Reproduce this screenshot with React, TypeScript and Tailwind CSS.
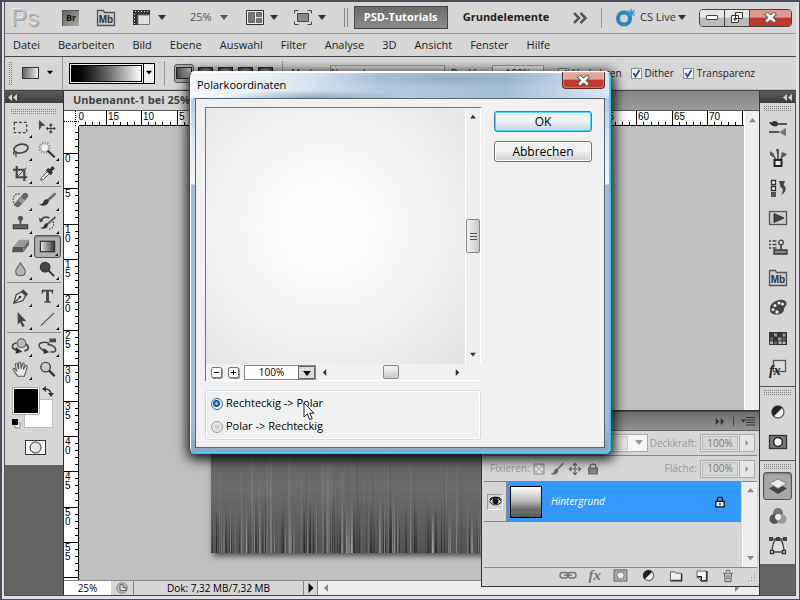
import React, { useState } from 'react';

const UNIT = 7.073; // one centimetre at 25 % zoom

function Ico({ children, size = 20 }: { children: React.ReactNode; size?: number }) {
  return (
    <svg width={size} height={size} viewBox="0 0 20 20" fill="none" stroke="#444" strokeWidth="1.3" className="block shrink-0" aria-hidden="true">
      {children}
    </svg>
  );
}

function Arrow({ dir = 'down', className = '' }: { dir?: 'down' | 'up' | 'left' | 'right'; className?: string }) {
  const shapes = { down: 'M0 1h8L4 6z', up: 'M0 6h8L4 1z', left: 'M6 0v8L2 4z', right: 'M2 0v8l4-4z' };
  return (
    <svg viewBox="0 0 8 8" fill="currentColor" className={`block shrink-0 ${className}`} aria-hidden="true">
      <path d={shapes[dir]} />
    </svg>
  );
}

function Collapse() {
  return (
    <svg width="9" height="7" viewBox="0 0 9 7" fill="#d2d2d2" aria-hidden="true">
      <path d="M4 0v7L0 3.500zM9 0v7L5 3.500z" />
    </svg>
  );
}

function Grip() {
  return (
    <div className="flex h-[10px] items-center justify-center">
      <div className="h-[5px] w-[49px] max-w-[78%] bg-[repeating-linear-gradient(0deg,transparent_0_1px,#d6d6d6_1px_2px),repeating-linear-gradient(90deg,#808080_0_1px,transparent_1px_2px)]" />
    </div>
  );
}

/* ---------- tool box ---------- */

const toolGroups: { name: string; sub?: boolean; icon: React.ReactNode }[][] = [
  [
    { name: 'Auswahlrechteck', sub: true, icon: <rect x="3.500" y="4.500" width="13" height="11" strokeDasharray="3 2" /> },
    {
      name: 'Verschieben',
      icon: (
        <>
          <path d="M1 2l7 6-4 .5L1 13z" fill="#4a4a4a" stroke="none" />
          <path d="M13.500 6.500v9M9 11h9M12 8l1.500-1.800L15 8M12 14l1.500 1.800L15 14M10.500 9.500L9 11l1.500 1.500M16.500 9.500L18 11l-1.500 1.500" strokeWidth="1.1" />
        </>
      ),
    },
    {
      name: 'Lasso',
      sub: true,
      icon: (
        <>
          <ellipse cx="10.500" cy="8" rx="7.500" ry="4.500" transform="rotate(-12 10.500 8)" strokeWidth="1.8" />
          <path d="M4 11c-2 1-2 3 0 3s2-2 .5-3M5 14c1 1 .5 2 0 3" strokeWidth="1.2" />
        </>
      ),
    },
    {
      name: 'Zauberstab',
      sub: true,
      icon: (
        <>
          <circle cx="7" cy="7" r="4.500" stroke="#888" strokeWidth="4" strokeDasharray="1 1.300" />
          <circle cx="7" cy="7" r="3.500" fill="#eee" stroke="none" />
          <path d="M10 10l7.500 7" stroke="#333" strokeWidth="2.2" />
        </>
      ),
    },
    {
      name: 'Freistellen',
      sub: true,
      icon: (
        <>
          <path d="M6 2v12h11M2 6h12v12" strokeWidth="2.2" />
          <path d="M5 15L16 4" strokeWidth="1" />
        </>
      ),
    },
    {
      name: 'Pipette',
      sub: true,
      icon: (
        <>
          <path d="M11 7L3.500 14.500 3 17l2.500-.5L13 9" fill="#eee" strokeWidth="1" />
          <path d="M9.500 5.500l5 5M12 8l4.500-4.500" strokeWidth="3.600" stroke="#333" />
        </>
      ),
    },
  ],
  [
    {
      name: 'Reparaturpinsel',
      sub: true,
      icon: (
        <>
          <path d="M9 3C2 2 1 10 4 15" strokeDasharray="1.500 1.500" stroke="#333" />
          <path d="M7 14l8-9" strokeWidth="6" strokeLinecap="round" stroke="#666" />
          <path d="M9.500 11.500l3-3.400" strokeWidth="5" stroke="#999" />
        </>
      ),
    },
    {
      name: 'Pinsel',
      sub: true,
      icon: (
        <>
          <path d="M18.500 2.500L10 10" strokeWidth="2.500" stroke="#666" />
          <path d="M11.500 10.500C10 8 7 8 6 11c-.7 2.500-3 3-5 3 3 2.500 9.500 2 10.500-3.500z" fill="#333" stroke="none" />
        </>
      ),
    },
    {
      name: 'Kopierstempel',
      sub: true,
      icon: (
        <>
          <circle cx="10" cy="4.500" r="2.700" fill="#555" stroke="none" />
          <path d="M9 6h2v5H9z" fill="#555" stroke="none" />
          <path d="M2.500 11.500h15v4h-15z" fill="#666" stroke="#3d3d3d" />
        </>
      ),
    },
    {
      name: 'Protokollpinsel',
      sub: true,
      icon: (
        <>
          <path d="M18.500 3L9.500 11" strokeWidth="2.200" stroke="#666" />
          <path d="M10.500 10.500C9 9 7 10 6.500 12c-.6 2-3 2.500-4.500 2.500 3 2 8.500 1.200 8.500-4z" fill="#333" stroke="none" />
          <path d="M3 7c2-4 6-4 9-3" strokeWidth="1.800" />
          <path d="M1 4l1 5 4-2z" fill="#444" stroke="none" />
          <path d="M16 8c2 4-1 8-5 8" strokeDasharray="1.500 1.500" />
        </>
      ),
    },
    {
      name: 'Radiergummi',
      sub: true,
      icon: (
        <>
          <path d="M8.500 3H19l-6 7.500H2z" fill="#999" stroke="none" />
          <path d="M2 10.500h11V16H1z" fill="#555" stroke="none" />
          <path d="M13 10.500L19 3v5.500L13 16z" fill="#6e6e6e" stroke="none" />
        </>
      ),
    },
    {
      name: 'Verlauf',
      sub: true,
      icon: (
        <>
          <defs>
            <linearGradient id="toolGrad">
              <stop stopColor="#eee" />
              <stop offset="1" stopColor="#333" />
            </linearGradient>
          </defs>
          <rect x="2.500" y="4.500" width="15" height="11" fill="url(#toolGrad)" stroke="#333" />
        </>
      ),
    },
    { name: 'Weichzeichner', sub: true, icon: <path d="M10 2.500c1 4 5 6 5 9.500 0 6-10 6-10 0 0-3.500 4-5.500 5-9.500z" fill="#b5b5b5" stroke="#666" /> },
    {
      name: 'Abwedler',
      sub: true,
      icon: (
        <>
          <path d="M9 9l8 8" strokeWidth="2" stroke="#333" />
          <circle cx="7.500" cy="7.500" r="5" fill="#484848" stroke="#333" />
        </>
      ),
    },
  ],
  [
    {
      name: 'Zeichenstift',
      sub: true,
      icon: (
        <>
          <path d="M3 17l2.500-9L11 5l4.500 4-3 5.500z" fill="#ddd" />
          <path d="M3 17l6-6" />
          <circle cx="9.500" cy="10.500" r="1.300" fill="#333" stroke="none" />
          <path d="M11.500 3.500l5.500 5" strokeWidth="3" />
        </>
      ),
    },
    { name: 'Text', sub: true, icon: <path d="M4 3h12v4h-1c-.3-1.700-1-2.500-3.500-2.500V14c0 1 .5 1.300 2 1.500v1h-7v-1c1.500-.2 2-.5 2-1.500V4.500C6 4.500 5.300 5.300 5 7H4z" fill="#484848" stroke="none" /> },
    { name: 'Pfadauswahl', sub: true, icon: <path d="M7 2l9 9.500-4.500.3 3 5-2.500 1-2.500-5L7 15.500z" fill="#484848" stroke="none" /> },
    { name: 'Linie', sub: true, icon: <path d="M3 16.500L17 3" stroke="#555" /> },
  ],
  [
    {
      name: '3D-Drehen',
      sub: true,
      icon: (
        <>
          <path d="M6 6C-1 8 1 13 6 13.500M15 7c5 3 4 7-1 7.500" strokeWidth="1.800" />
          <circle cx="11" cy="6.500" r="4.500" fill="#bbb" stroke="#666" />
          <path d="M5 10.500l7 5-7 2z" fill="#333" stroke="none" />
        </>
      ),
    },
    {
      name: '3D-Kamera',
      sub: true,
      icon: (
        <>
          <path d="M12 6.500C4 4-1 7 2 11c2 2.500 4 3.500 6 4M10 8c6 0 10 4 8 7-1 1-3 1-5 .5" strokeWidth="1.600" />
          <path d="M13 1.500h6v4h-6l-1 .5V1z" fill="#444" stroke="none" />
          <path d="M6 11.500l6 4.500-6 2z" fill="#333" stroke="none" />
        </>
      ),
    },
    {
      name: 'Hand',
      sub: true,
      icon: <path d="M7 17L2.500 10.500c-1-2 1-2.500 2.500 0L6 12 4.500 5c-.2-2 1.800-2 2.300 0L8 9.500V3.500c0-2 2-2 2.200 0l.4 6 1.300-5.200c.5-2 2.300-1.300 2 .5L13 10l2-3.500c1-1.700 2.500-.8 2 1-1 4-2 7-3 9.500z" fill="#e7e7e7" stroke="#555" strokeWidth="1.100" />,
    },
    {
      name: 'Zoom',
      icon: (
        <>
          <circle cx="8" cy="7.500" r="5" fill="#ccc" strokeWidth="1.500" />
          <path d="M11.500 11l6 6" strokeWidth="2.500" stroke="#333" />
        </>
      ),
    },
  ],
];

function ToolBox() {
  return (
    <aside className="flex w-[59px] shrink-0 flex-col border-r border-[#333] bg-[#646464]">
      <div className="flex h-[12px] items-center bg-linear-to-b from-[#5a5a5a] to-[#3c3c3c] px-[3px]">
        <Collapse />
      </div>
      <div className="bg-[#d6d6d6] pt-[3px] pb-[8px]">
        <Grip />
        {toolGroups.map((group, i) => (
          <div key={i} className={i < 3 ? 'mx-[2px] mb-[2px] border-b border-[#8c8c8c] pb-px' : 'mx-[2px]'}>
            <div className="grid grid-cols-2">
              {group.map((tool) => (
                <button
                  key={tool.name}
                  aria-label={tool.name}
                  className={`relative flex h-[23px] items-center justify-center rounded-[3px] ${
                    tool.name === 'Verlauf' ? 'border border-[#555] bg-[#b4b4b4] shadow-[inset_0_1px_2px_#777]' : ''
                  }`}
                >
                  <Ico size={19}>{tool.icon}</Ico>
                  {tool.sub && (
                    <svg width="3" height="3" viewBox="0 0 3 3" className="absolute right-[2px] bottom-[1px]" aria-hidden="true">
                      <path d="M3 0v3H0z" fill="#000" />
                    </svg>
                  )}
                </button>
              ))}
            </div>
          </div>
        ))}
        <svg width="50" height="76" viewBox="0 0 50 76" className="mx-auto block" aria-hidden="true">
          <rect x="15.500" y="18.500" width="28" height="28" fill="#fff" stroke="#bbb" />
          <path d="M3.500 6.500h27v27h-27z" fill="#fff" stroke="#aaa" />
          <path d="M5 8h24v24H5z" fill="#000" />
          <path d="M36 8c4 0 6 2 6 6" fill="none" stroke="#333" strokeWidth="1.500" />
          <path d="M37 5v6l-4-3zM39 12h6l-3 4z" fill="#333" />
          <path d="M6 42h5v5H6z" fill="#fff" stroke="#888" />
          <path d="M3 38h6v6H3z" fill="#000" />
          <rect x="16.500" y="59.500" width="20" height="14" fill="#fff" stroke="#333" />
          <circle cx="26.500" cy="66.500" r="5.500" fill="#e4e4e4" stroke="#222" />
        </svg>
      </div>
    </aside>
  );
}

/* ---------- panel dock ---------- */

const mbFolder = (
  <>
    <path d="M1.500 17.500v-15h6l1 2h10v13z" fill="#ccc" stroke="#555" />
    <text x="10" y="15" textAnchor="middle" fontFamily="Liberation Sans" fontWeight="700" fontSize="10" fill="#333" stroke="none">
      Mb
    </text>
  </>
);

const maskIcon = (
  <>
    <rect x="1.500" y="3.500" width="17" height="13" fill="#777" stroke="#333" />
    <circle cx="10" cy="10" r="4.300" fill="#fff" stroke="#111" />
  </>
);

const adjustIcon = (
  <>
    <circle cx="10" cy="10" r="6" fill="#eee" stroke="#666" />
    <path d="M14.500 5.500a6.300 6.300 0 0 0-9 9z" fill="#222" stroke="none" />
  </>
);

const dockGroups: { name: string; icon: React.ReactNode }[][] = [
  [
    {
      name: 'Pinsel',
      icon: (
        <>
          <path d="M10 6h9M1 14h10" strokeWidth="1.800" stroke="#555" />
          <path d="M1 4c3 0 3 1 4-.5 2-1 5 0 5 2.500S7 9 5 8C3 7 2 6 1 4z" fill="#333" stroke="none" />
          <path d="M10 14c3 0 4-2 8-4v8c-4-1-5-4-8-4z" fill="#777" stroke="none" />
        </>
      ),
    },
    {
      name: 'Werkzeugvorgaben',
      icon: (
        <>
          <path d="M8 12L4 5M10 12V3M12 12l4-6" strokeWidth="1.500" />
          <path d="M2 3l4 3-1 3-3-2zM8 1h3v5H9zM14 4l5 2-3 3-3-1z" fill="#555" stroke="none" />
          <path d="M6.500 12h7v6h-7z" fill="#eee" stroke="#222" strokeWidth="2" />
        </>
      ),
    },
    {
      name: 'Protokoll',
      icon: (
        <>
          <path d="M3.500 2.500h4v4h-4zM3.500 8.500h4v4h-4z" fill="#fff" stroke="#333" />
          <path d="M3 14h5v5H3z" fill="#555" stroke="none" />
          <path d="M11 3h6l-1.500 4c4 3 2 8-2.500 10 3-4 2-7-.500-8z" fill="#444" stroke="none" />
        </>
      ),
    },
    {
      name: 'Aktionen',
      icon: (
        <>
          <rect x="1.500" y="3.500" width="17" height="13" fill="#ccc" stroke="#555" />
          <path d="M6 5.500l10 4.500-10 4.500z" fill="#444" stroke="#222" strokeWidth=".8" />
        </>
      ),
    },
    {
      name: 'Kopierquelle',
      icon: (
        <>
          <path d="M1 3h2M1 6.500h2M1 10h2M4.500 3h4M4.500 6.500h4M4.500 10h4" />
          <circle cx="13" cy="4.500" r="2.300" />
          <path d="M12 7h2v4h-2z" fill="#555" stroke="none" />
          <path d="M6 12h13v4H6z" fill="#888" stroke="#333" />
        </>
      ),
    },
    { name: 'Mini Bridge', icon: mbFolder },
    {
      name: 'Farbe',
      icon: (
        <>
          <path d="M11 2c8-1 9 4 6 7-2 2 0 4-3 6-4 3-13 2-12-4 0-5 4-8 9-9z" fill="#444" stroke="none" />
          <g fill="#eee" stroke="none">
            <circle cx="11" cy="5" r="1.500" />
            <circle cx="7" cy="7.500" r="1.500" />
            <circle cx="5" cy="11.500" r="1.500" />
            <circle cx="9" cy="14" r="1.700" />
            <circle cx="14.500" cy="6" r="1.500" />
          </g>
        </>
      ),
    },
    {
      name: 'Farbfelder',
      icon: (
        <>
          <path d="M1 4h18v13H1z" fill="#333" stroke="none" />
          <path d="M6 5.500h3v3H6zM14.500 5.500h3v3h-3zM10 9.500h3.500v3H10z" fill="#999" stroke="none" />
          <path d="M2 9.500h3v3H2zM6 13.500h3v2.500H6zM14.500 9.500h3v3h-3z" fill="#666" stroke="none" />
          <path d="M2 13.500h3v2.500H2zM10.500 13.500h3v2.500h-3zM14.500 13.500h3v2.500h-3z" fill="#bbb" stroke="none" />
        </>
      ),
    },
    {
      name: 'Stile',
      icon: (
        <>
          <rect x="5.500" y="2.500" width="12" height="11" fill="#ddd" stroke="#555" />
          <text x="1" y="17" fontFamily="Liberation Serif" fontStyle="italic" fontWeight="700" fontSize="14" fill="#222" stroke="none">
            fx
          </text>
        </>
      ),
    },
  ],
  [
    { name: 'Korrekturen', icon: adjustIcon },
    { name: 'Masken', icon: maskIcon },
  ],
  [
    {
      name: 'Ebenen',
      icon: (
        <>
          <path d="M1 12.500l9-5 9 5-9 5.500z" fill="#444" stroke="none" />
          <path d="M1.500 7.500L10 3l8.500 4.500L10 12.500z" fill="#eee" stroke="#777" strokeWidth=".8" />
        </>
      ),
    },
    {
      name: 'Kanäle',
      icon: (
        <g stroke="none">
          <circle cx="10" cy="7" r="5" fill="#777" />
          <circle cx="6.500" cy="13" r="5" fill="#555" />
          <circle cx="13.500" cy="13" r="5" fill="#999" />
          <circle cx="10" cy="11" r="3" fill="#eee" />
        </g>
      ),
    },
    {
      name: 'Pfade',
      icon: (
        <>
          <path d="M4 16C4 10 6 4 8 3.500h4c2 .5 4 6.500 4 12.500z" fill="#ddd" />
          <path d="M1 1h4v4H1zM8 1h4v4H8zM15 1h4v4h-4z" fill="#444" stroke="none" />
          <path d="M2.500 14.500h3v3h-3zM14.500 14.500h3v3h-3z" fill="#fff" stroke="#333" />
          <path d="M5 3h10" />
        </>
      ),
    },
  ],
];

function Dock() {
  return (
    <aside className="flex w-[37px] shrink-0 flex-col border-r border-l border-r-[#555] border-l-[#333] bg-[#646464]">
      <div className="flex h-[12px] items-center justify-end bg-linear-to-b from-[#5a5a5a] to-[#3c3c3c] px-[3px]">
        <Collapse />
      </div>
      {dockGroups.map((group, i) => (
        <div key={i} className={`flex flex-col items-stretch bg-[#d6d6d6] pb-[3px] ${i < 2 ? 'border-b border-[#555]' : ''}`}>
          <Grip />
          {group.map((item) => (
            <div key={item.name} className="flex h-[30px] items-center justify-center">
              <button
                aria-label={item.name}
                className={`flex h-[28px] w-[29px] items-center justify-center rounded-[3px] ${
                  item.name === 'Ebenen' ? 'border border-[#555] bg-[#a8a8a8] shadow-[inset_0_1px_2px_#777]' : ''
                }`}
              >
                <Ico>{item.icon}</Ico>
              </button>
            </div>
          ))}
        </div>
      ))}
    </aside>
  );
}

/* ---------- document ---------- */

function HRuler() {
  const origin = 133;
  const ticks = Array.from({ length: 96 }, (_, i) => i - 20);
  return (
    <svg className="block h-[15px] min-w-0 flex-1 border-b border-black bg-white font-['Liberation_Sans',sans-serif]" aria-hidden="true">
      {ticks.map((n) => {
        const x = Math.round(origin + n * UNIT);
        const major = n % 5 === 0;
        return (
          <g key={n}>
            <rect x={x} y={major ? 0 : 11} width="1" height="14" fill="#000" />
            {major && (
              <text x={x + 2} y="9" fontSize="10">
                {Math.abs(n)}
              </text>
            )}
          </g>
        );
      })}
    </svg>
  );
}

function VRuler() {
  const origin = 27;
  const ticks = Array.from({ length: 65 }, (_, i) => i - 3);
  return (
    <svg className="block w-[15px] shrink-0 border-r border-black bg-white font-['Liberation_Sans',sans-serif]" aria-hidden="true">
      {ticks.map((n) => {
        const y = Math.round(origin + n * UNIT);
        const major = n % 5 === 0;
        return (
          <g key={n}>
            <rect x={major ? 0 : 11} y={y} width="15" height="1" fill="#000" />
            {major &&
              n < 60 &&
              String(Math.abs(n))
                .split('')
                .map((d, i) => (
                  <text key={i} x="1" y={y + 9 + i * 9} fontSize="10">
                    {d}
                  </text>
                ))}
          </g>
        );
      })}
    </svg>
  );
}

// deterministic noise so the streaks stay the same on every render
const noise = (i: number) => {
  const v = Math.sin(i * 127.1 + 11.7) * 43758.5453;
  return v - Math.floor(v);
};

function Artwork({ className, id }: { className?: string; id: string }) {
  return (
    <svg viewBox="0 0 390 400" preserveAspectRatio="none" className={className} aria-hidden="true">
      <defs>
        <linearGradient id={`${id}-bg`} x2="0" y2="1">
          <stop stopColor="#fff" />
          <stop offset="0.45" stopColor="#bbb" />
          <stop offset="0.76" stopColor="#666" />
          <stop offset="0.84" stopColor="#6c6c6c" />
          <stop offset="1" stopColor="#525252" />
        </linearGradient>
        <linearGradient id={`${id}-l`} x2="0" y2="1">
          <stop stopColor="#bbb" stopOpacity="0" />
          <stop offset="1" stopColor="#bbb" />
        </linearGradient>
        <linearGradient id={`${id}-d`} x2="0" y2="1">
          <stop stopColor="#1c1c1c" stopOpacity="0" />
          <stop offset="1" stopColor="#1c1c1c" />
        </linearGradient>
      </defs>
      <rect width="390" height="400" fill={`url(#${id}-bg)`} />
      {Array.from({ length: 250 }, (_, i) => {
        const light = noise(i + 900) > 0.6;
        const h = noise(i + 300) > 0.25 ? 35 + noise(i + 500) * 25 : 80 + noise(i + 500) * 60;
        return (
          <rect
            key={i}
            x={Math.floor(noise(i) * 390)}
            y={400 - h}
            width={noise(i + 50) > 0.7 ? 2 : 1}
            height={h}
            opacity={h > 70 ? 0.22 : light ? 0.2 + noise(i + 70) * 0.4 : 0.3 + noise(i + 70) * 0.4}
            fill={light ? `url(#${id}-l)` : `url(#${id}-d)`}
          />
        );
      })}
    </svg>
  );
}

function Document() {
  return (
    <main className="flex min-w-0 flex-1 flex-col">
      <div className="flex h-[20px] shrink-0 border-b border-[#555] bg-linear-to-b from-[#858585] to-[#9c9c9c]">
        <div className="flex items-center bg-[#d6d6d6] px-[9px] text-[11px] font-bold whitespace-nowrap text-[#444]">Unbenannt-1 bei 25%</div>
      </div>
      <div className="flex min-h-0 flex-1">
        <div className="flex min-w-0 flex-1 flex-col">
          <div className="flex h-[15px]">
            <svg width="15" height="15" className="block shrink-0 bg-white" aria-hidden="true">
              <path d="M11.500 0v15M0 10.500h15" stroke="#000" strokeDasharray="1 1" />
            </svg>
            <HRuler />
          </div>
          <div className="flex flex-1">
            <VRuler />
            <div className="flex-1 bg-[#bfbfbf] pt-[27px] pb-[27px] pl-[132px]">
              <Artwork id="art" className="block h-[400px] w-[390px] max-w-full shadow-[2px_3px_6px_rgba(0,0,0,0.6)]" />
            </div>
          </div>
        </div>
        <div className="flex w-[15px] shrink-0 flex-col items-center justify-between border-l border-white bg-[#ededed] py-[6px] text-[#888]">
          <Arrow dir="up" className="h-[7px] w-[7px]" />
          <Arrow className="h-[7px] w-[7px]" />
        </div>
      </div>
      <div className="flex h-[15px] shrink-0 items-stretch border-t border-[#888] bg-[#d6d6d6] text-[10px] text-black">
        <input aria-label="Zoomstufe" defaultValue="25%" className="w-[47px] bg-white text-center" />
        <div className="flex w-[23px] items-center justify-center border-r border-[#888]">
          <svg width="12" height="12" viewBox="0 0 12 12" fill="none" stroke="#666" aria-hidden="true">
            <circle cx="6" cy="6" r="5.300" fill="#bbb" stroke="#888" />
            <path d="M4 8.500v-6h3v3h3v3z" fill="#ddd" />
          </svg>
        </div>
        <div className="flex w-[170px] items-center justify-center border-r border-[#888] leading-none">Dok: 7,32 MB/7,32 MB</div>
        <button aria-label="Statusmenü" className="flex w-[14px] items-center justify-center border-r border-[#888]">
          <Arrow dir="right" className="h-[10px] w-[10px]" />
        </button>
        <div className="flex flex-1 items-center justify-between bg-[#ededed] px-[4px] text-[#888]">
          <Arrow dir="left" className="h-[8px] w-[8px]" />
          <Arrow dir="right" className="mr-[14px] h-[8px] w-[8px]" />
        </div>
      </div>
    </main>
  );
}

/* ---------- layers panel ---------- */

function PercentField({ label }: { label: string }) {
  return (
    <label className="flex items-center gap-[3px] whitespace-nowrap">
      {label}
      <span className="flex h-[18px] border border-[#aaa] bg-[#e6e6e6]">
        <input defaultValue="100%" className="m-px w-[36px] border border-[#bbb] bg-[#d6d6d6] text-center text-[10px] text-[#777]" />
        <span className="flex w-[15px] items-center justify-center border-l border-[#aaa]">
          <Arrow dir="right" className="h-[6px] w-[6px]" />
        </span>
      </span>
    </label>
  );
}

function LayersPanel() {
  return (
    <section className="absolute right-[36px] bottom-[8px] z-10 w-[279px] border border-[#333] bg-[#d6d6d6] text-[10px] text-[#999]">
      <header className="flex h-[20px] items-center justify-end gap-[7px] border-t border-b border-t-[#444] border-b-[#666] bg-linear-to-b from-[#6e6e6e] to-[#929292] pr-[4px] text-[#333]">
        <span className="flex">
          <Arrow dir="right" className="-mr-[2px] h-[7px] w-[7px]" />
          <Arrow dir="right" className="h-[7px] w-[7px]" />
        </span>
        <span className="h-[9px] w-px bg-[#444]" />
        <svg width="14" height="9" viewBox="0 0 14 9" stroke="#333" fill="#333" aria-hidden="true">
          <path d="M0 2.500h5L2.500 5.500z" stroke="none" />
          <path d="M5 .5h9M5 3h9M5 5.500h9M5 8h9" />
        </svg>
      </header>
      <div className="mx-[2px] flex h-[25px] items-center justify-between border-b border-[#888] pr-[2px]">
        <div className="flex h-[18px] w-[164px] items-center border border-[#aaa] bg-[#f6f6f6] pr-[4px]">
          <select aria-label="Füllmethode" className="m-px flex-1 appearance-none border border-[#ccc] bg-[#e6e6e6] pl-[4px] leading-[12px]">
            <option>Normal</option>
          </select>
          <Arrow className="ml-[6px] h-[8px] w-[8px]" />
        </div>
        <PercentField label="Deckkraft:" />
      </div>
      <div className="mx-[2px] flex h-[26px] items-center border-b border-[#888] pr-[2px] pl-[6px]">
        <span className="w-[42px]">Fixieren:</span>
        <span className="flex items-center gap-[4px]">
          <Ico size={14}>
            <path d="M3 3h14v14H3z" fill="#eee" stroke="#888" strokeWidth="1.500" />
            <path d="M4 4h4v4H4zM12 4h4v4h-4zM8 8h4v4H8zM4 12h4v4H4zM12 12h4v4h-4z" fill="#bbb" stroke="none" />
          </Ico>
          <Ico size={14}>
            <path d="M19 2L10 11" stroke="#777" strokeWidth="2.500" />
            <path d="M12 11c-2-3-6-1-6 2-1 3-3 3-5 4 4 2 11 1 11-6z" fill="#666" stroke="none" />
          </Ico>
          <Ico size={14}>
            <path d="M10 2v16M2 10h16M7 5l3-3 3 3M7 15l3 3 3-3M5 7l-3 3 3 3M15 7l3 3-3 3" stroke="#666" strokeWidth="1.600" />
          </Ico>
          <Ico size={14}>
            <path d="M6 9V6c0-4 8-4 8 0v3" stroke="#666" strokeWidth="2" />
            <path d="M4 9h12v8H4z" fill="#888" stroke="#666" strokeWidth="2" />
          </Ico>
        </span>
        <span className="ml-auto">
          <PercentField label="Fläche:" />
        </span>
      </div>
      <div className="mx-[2px] flex h-[86px] border-b border-[#888]">
        <div className="flex-1">
          <div className="flex h-[40px] border-b border-[#888]">
            <button aria-label="Sichtbarkeit" className="flex w-[23px] items-center justify-center border-r border-[#888]">
              <span className="flex h-[16px] w-[16px] items-center justify-center border border-t-[#999] border-r-white border-b-white border-l-[#999]">
                <Ico size={13}>
                  <path d="M1 10c4-7 14-7 18 0-4 7-14 7-18 0z" fill="#ddd" stroke="#111" strokeWidth="1.500" />
                  <circle cx="10" cy="9.500" r="4.500" fill="#111" stroke="none" />
                  <path d="M1 7c4-5 14-5 18 0" stroke="#111" strokeWidth="2" />
                </Ico>
              </span>
            </button>
            <div className="flex flex-1 items-center gap-[9px] bg-[#3399ff] pr-[15px] pl-[3px] text-[10px] text-white italic">
              <Artwork id="thumb" className="block h-[32px] w-[32px] border border-black" />
              <span className="flex-1">Hintergrund</span>
              <Ico size={12}>
                <path d="M6 9V5c0-4 8-4 8 0v4" stroke="#111" strokeWidth="2" />
                <path d="M3 9h14v9H3z" fill="#eee" stroke="#111" strokeWidth="2" />
                <path d="M10 11.500v4" stroke="#111" strokeWidth="2" />
              </Ico>
            </div>
          </div>
        </div>
        <div className="ml-[1px] flex w-[15px] flex-col items-center justify-between border-l border-white bg-[#ededed] py-[5px] text-[#888]">
          <Arrow dir="up" className="h-[7px] w-[7px]" />
          <Arrow className="h-[7px] w-[7px]" />
        </div>
      </div>
      <footer className="flex h-[18px] items-center justify-end gap-[12px] pr-[2px] pb-[3px]">
        <svg width="18" height="9" viewBox="0 0 18 9" fill="none" stroke="#777" strokeWidth="1.500" aria-hidden="true">
          <rect x="1" y="1.500" width="8" height="5.500" rx="2.700" />
          <rect x="9" y="1.500" width="8" height="5.500" rx="2.700" />
          <path d="M5 4.300h8" />
        </svg>
        <span className="font-['Liberation_Serif',serif] text-[15px] leading-none font-bold text-[#777] italic">fx</span>
        <Ico size={15}>
          <rect x="1.500" y="2.500" width="17" height="15" fill="#aaa" stroke="#666" />
          <circle cx="10" cy="10" r="4.800" fill="#eee" stroke="#777" />
        </Ico>
        <Ico size={17}>{adjustIcon}</Ico>
        <Ico size={14}>
          <path d="M2 16V4h6l2 2h8v10z" fill="#eee" stroke="#555" />
          <path d="M2 17h16V7" stroke="#222" strokeWidth="2" />
        </Ico>
        <Ico size={14}>
          <path d="M3 3h13v14H9l-6-5z" fill="#fff" stroke="#555" />
          <path d="M3 11h6v6M17 3v14H8" stroke="#222" strokeWidth="2" />
        </Ico>
        <Ico size={14}>
          <path d="M5 7l1 11h8l1-11M3 6h14M7 4c0-3 6-3 6 0M8.500 8.500v7M11.500 8.500v7" stroke="#666" strokeWidth="1.600" />
        </Ico>
        <span className="h-[11px] w-[10px] bg-[radial-gradient(circle,#888_0.8px,transparent_1px)] bg-[length:3px_3px] [clip-path:polygon(100%_0,100%_100%,0_100%)]" />
      </footer>
    </section>
  );
}

/* ---------- dialog ---------- */

function CloseGlyph() {
  return (
    <svg width="13" height="11" viewBox="0 0 13 11" fill="none" aria-hidden="true">
      <path d="M1.500 1l10 9M11.500 1l-10 9" stroke="#555" strokeWidth="4.500" />
      <path d="M2.200 1.500l8.600 8M10.800 1.500l-8.600 8" stroke="#fff" strokeWidth="2.600" />
    </svg>
  );
}

function Radio({ label, checked, onChange }: { label: string; checked: boolean; onChange: () => void }) {
  return (
    <label className="flex h-[23px] items-center gap-[3px]">
      <input
        type="radio"
        name="mode"
        checked={checked}
        onChange={onChange}
        className="h-[12px] w-[12px] appearance-none rounded-full border border-[#999] bg-[radial-gradient(circle,#c8c8c8,#eee_5px)] checked:border-[#3a6ea5] checked:bg-[radial-gradient(circle_at_45%_45%,#9fe8ff_0,#1b7fc4_2px,#0a3d6e_3px,#e8f2fa_4px)]"
      />
      {label}
    </label>
  );
}

function PolarDialog() {
  const [mode, setMode] = useState('polar');

  return (
    <div
      role="dialog"
      aria-labelledby="dialog-title"
      className="absolute top-[69px] left-[187px] z-20 w-[422px] rounded-[6px] border border-t-white border-r-[#1fc4f8] border-b-[#1fc4f8] border-l-[#3d4652] bg-[linear-gradient(180deg,#c9daea_0,#b7cbe0_28px,#dfe9f2_70px,#f2f6fa_112px,#a4bbd6_113px,#a4bbd6_92%,#8aa5c0)] px-[5px] pb-[5px] text-[11px] text-black shadow-[inset_1px_1px_0_#fff,inset_-1px_-1px_0_#4fd0f8,1px_3px_12px_3px_rgba(0,0,0,0.85)]"
    >
      <div className="absolute inset-x-px top-px h-[25px] rounded-t-[5px] bg-[radial-gradient(ellipse_at_29%_100%,rgba(115,145,175,0.7)_0,transparent_22%),radial-gradient(ellipse_at_62%_20%,rgba(130,150,170,0.5)_0,transparent_35%),linear-gradient(90deg,#f4f8fb_0,#e2ebf4_22%,#b4c9df_45%,#a3bdd6_75%,#dae6f0)]" />
      <div className="relative flex h-[26px] items-center justify-between">
        <h2 id="dialog-title" className="pl-[2px] font-normal">
          Polarkoordinaten
        </h2>
        <button aria-label="Schließen" className="flex h-[17px] w-[43px] items-center justify-center self-start rounded-b-[4px] border border-t-0 border-[#5a2a26] bg-linear-to-b from-[#e0a49a] from-45% to-[#c0392b] to-50% shadow-[inset_0_0_2px_#fff]">
          <CloseGlyph />
        </button>
      </div>
      <div className="relative flex gap-[13px] border border-[#56646f] bg-[#f0f0f0] pt-[8px] pr-[12px] pb-[7px] pl-[9px]">
        <div className="flex-1">
          <div className="border-t border-l border-[#777]">
            <div className="flex">
              <div className="h-[256px] flex-1 bg-[radial-gradient(ellipse_at_46%_46%,#fdfdfd_0,#fafafa_25%,#f0f0f0_60%,#e2e2e2)]" />
              <div className="flex w-[16px] flex-col items-center border-x border-white bg-[#eee] py-[6px] text-[#333]">
                <Arrow dir="up" className="h-[6px] w-[6px]" />
                <div className="flex-1" />
                <div className="flex h-[34px] w-[14px] flex-col items-center justify-center gap-[2px] rounded-[2px] border border-[#888] bg-linear-to-r from-[#f4f4f4] to-[#c8c8c8]">
                  <span className="h-px w-[7px] bg-[#555]" />
                  <span className="h-px w-[7px] bg-[#555]" />
                  <span className="h-px w-[7px] bg-[#555]" />
                </div>
                <div className="flex-1" />
                <Arrow className="h-[6px] w-[6px]" />
              </div>
            </div>
            <div className="flex h-[17px] items-center border-b border-white pr-[20px] pl-[5px]">
              <button aria-label="Verkleinern" className="mr-[6px] flex h-[11px] w-[11px] items-center justify-center rounded-[2px] border border-[#777] bg-white shadow-[1px_1px_0_#999]">
                <span className="h-px w-[5px] bg-black" />
              </button>
              <button aria-label="Vergrößern" className="mr-[5px] flex h-[11px] w-[11px] items-center justify-center rounded-[2px] border border-[#777] bg-white shadow-[1px_1px_0_#999]">
                <svg width="5" height="5" viewBox="0 0 5 5" aria-hidden="true">
                  <path d="M0 2.500h5M2.500 0v5" stroke="#000" />
                </svg>
              </button>
              <div className="flex h-[15px] w-[72px] border border-[#888] bg-white">
                <input aria-label="Zoom" defaultValue="100%" className="w-0 flex-1 text-center text-[10px]" />
                <button aria-label="Zoomstufen" className="flex w-[17px] items-end justify-center border border-[#666] bg-[#ddd]">
                  <Arrow className="h-[8px] w-[8px]" />
                </button>
              </div>
              <div className="ml-[5px] flex flex-1 items-center justify-between text-[#333]">
                <Arrow dir="left" className="h-[7px] w-[7px]" />
                <span className="h-[14px] w-[16px] rounded-[2px] border border-[#888] bg-linear-to-b from-[#f6f6f6] to-[#c6c6c6]" />
                <Arrow dir="right" className="h-[7px] w-[7px]" />
              </div>
            </div>
          </div>
          <fieldset className="mt-[9px] rounded-[3px] border border-[#d0dce6] px-[5px] pt-px pb-px shadow-[inset_0_0_0_1px_#fff]">
            <Radio label="Rechteckig -> Polar" checked={mode === 'polar'} onChange={() => setMode('polar')} />
            <Radio label="Polar -> Rechteckig" checked={mode === 'rect'} onChange={() => setMode('rect')} />
          </fieldset>
        </div>
        <div className="flex w-[98px] flex-col gap-[9px] pt-[4px] text-[12px] leading-none">
          <button className="h-[21px] rounded-[3px] border border-[#2a86c0] bg-linear-to-b from-[#eef2f5] from-45% to-[#c3d3dd] shadow-[inset_0_0_0_1px_#4fd6fa]">OK</button>
          <button className="h-[21px] rounded-[3px] border border-[#707070] bg-linear-to-b from-[#f2f2f2] from-45% to-[#cfcfcf] shadow-[inset_0_0_0_1px_#fff]">Abbrechen</button>
        </div>
      </div>
      <svg width="13" height="20" viewBox="0 0 13 20" className="absolute top-[330px] left-[113px]" aria-hidden="true">
        <path d="M1 1v14l3.300-3 2.400 5.500 2.500-1-2.400-5.300H11z" fill="#fff" stroke="#222" />
      </svg>
    </div>
  );
}

/* ---------- application bars ---------- */

function Check({ label }: { label: string }) {
  return (
    <label className="flex items-center gap-[3px]">
      <input
        type="checkbox"
        defaultChecked
        className="peer h-[11px] w-[11px] appearance-none border border-[#8a8f98] bg-[#f4f4f4]"
      />
      <svg width="9" height="9" viewBox="0 0 9 9" className="-ml-[13px] mr-px hidden peer-checked:block" aria-hidden="true">
        <path d="M1.500 4l2 3.500L7.500 1" fill="none" stroke="#2c4a8c" strokeWidth="1.800" />
      </svg>
      {label}
    </label>
  );
}

const menus = ['Datei', 'Bearbeiten', 'Bild', 'Ebene', 'Auswahl', 'Filter', 'Analyse', '3D', 'Ansicht', 'Fenster', 'Hilfe'];

function AppBar() {
  return (
    <header className="flex h-[32px] items-center border-b border-[#999] pr-[4px] pl-[6px] text-[#333]">
      <span className="w-[51px] font-['Liberation_Sans',sans-serif] text-[24px] leading-none text-[#c2c2c2] [text-shadow:1px_1px_0_#999,-1px_-1px_0_#eee]">Ps</span>
      <button className="flex h-[16px] w-[17px] items-center justify-center border-t border-l border-[#555] bg-linear-to-br from-[#666] to-[#aaa] text-[9px] font-bold text-[#111]">Br</button>
      <button aria-label="Mini Bridge" className="ml-[17px]">
        <Ico>{mbFolder}</Ico>
      </button>
      <button aria-label="Extras" className="ml-[16px] flex items-center gap-[7px]">
        <svg width="19" height="17" viewBox="0 0 19 17" aria-hidden="true">
          <path d="M1 1h17v5H6v10H1z" fill="#333" />
          <path d="M3 2.500h15M2.500 5v11" stroke="#ddd" strokeDasharray="1 2" />
          <path d="M6 6h11.500v9.500H6z" fill="#e0e0e0" stroke="#777" />
        </svg>
        <Arrow className="h-[8px] w-[8px]" />
      </button>
      <button className="ml-[24px] flex items-center gap-[8px] text-[11px] text-[#555]">
        25%
        <Arrow className="h-[8px] w-[8px]" />
      </button>
      <button aria-label="Dokumente anordnen" className="ml-[18px] flex items-center gap-[6px]">
        <svg width="18" height="15" viewBox="0 0 18 15" fill="#777" stroke="#333" aria-hidden="true">
          <path d="M.5.500h17v14H.5z" fill="#eee" />
          <path d="M2.500 2.500h6v10h-6zM10.500 2.500h5v4h-5zM10.500 8.500h5v4h-5z" stroke="#666" />
        </svg>
        <Arrow className="h-[8px] w-[8px]" />
      </button>
      <button aria-label="Bildschirmmodus" className="ml-[16px] flex items-center gap-[6px]">
        <svg width="18" height="15" viewBox="0 0 18 15" fill="none" stroke="#444" aria-hidden="true">
          <path d="M.5 3.500v-3h4M13.500.500h4v3M17.500 11.500v3h-4M4.500 14.500h-4v-3" />
          <path d="M3.500 3.500h11v8h-11z" fill="#888" stroke="#444" />
        </svg>
        <Arrow className="h-[8px] w-[8px]" />
      </button>
      <span className="ml-[18px] h-[19px] w-[4px] border-x border-[#888]" />
      <button className="ml-[6px] flex h-[23px] w-[94px] items-center justify-center border border-[#444] bg-linear-to-b from-[#6b6b6b] to-[#8c8c8c] text-[11px] font-bold text-white">PSD-Tutorials</button>
      <button className="ml-[15px] text-[11px] font-bold text-[#222]">Grundelemente</button>
      <svg width="16" height="12" viewBox="0 0 16 12" fill="none" stroke="#555" strokeWidth="2.500" className="ml-auto" aria-hidden="true">
        <path d="M2 1l5 5-5 5M8.500 1l5 5-5 5" />
      </svg>
      <span className="mx-[13px] h-[20px] w-px bg-[#999]" />
      <button className="flex items-center gap-[4px] text-[11px]">
        <svg width="21" height="18" viewBox="0 0 21 18" fill="none" stroke="#2a86b8" aria-hidden="true">
          <circle cx="9" cy="9.500" r="6" strokeWidth="4" />
          <path d="M16.500 0v8M12.500 4h8M13.500 1l6 6M19.500 1l-6 6" strokeWidth="1.200" stroke="#3b9bc9" />
        </svg>
        CS Live
        <Arrow className="-ml-[2px] h-[8px] w-[8px]" />
      </button>
      <div className="ml-[13px] flex h-[18px] overflow-hidden rounded-[4px] border border-[#444]">
        <button aria-label="Minimieren" className="flex w-[25px] items-center justify-center border-r border-[#444] bg-linear-to-b from-[#e8e8e8] from-45% to-[#bbb] to-50%">
          <span className="h-[5px] w-[12px] rounded-[1px] border border-[#444] bg-white" />
        </button>
        <button aria-label="Wiederherstellen" className="flex w-[25px] items-center justify-center border-r border-[#444] bg-linear-to-b from-[#e8e8e8] from-45% to-[#bbb] to-50%">
          <svg width="12" height="11" viewBox="0 0 12 11" fill="#fff" stroke="#333" aria-hidden="true">
            <path d="M4.500.5h7v6h-7zM.5 3.500h7v7h-7zM3 6.500h2v1.500H3z" />
          </svg>
        </button>
        <button aria-label="Beenden" className="flex w-[41px] items-center justify-center bg-linear-to-b from-[#dd9a90] from-45% to-[#bd3a2c] to-50%">
          <CloseGlyph />
        </button>
      </div>
    </header>
  );
}

function OptionsBar() {
  return (
    <div className="flex h-[34px] items-center border-t border-b border-t-[#444] border-b-[#bbb] pl-[4px] text-[10px] text-[#222]">
      <span className="mr-[10px] h-[23px] w-[3px] bg-[repeating-linear-gradient(0deg,transparent_0_1px,#d6d6d6_1px_2px),repeating-linear-gradient(90deg,#808080_0_1px,transparent_1px_2px)]" />
      <button aria-label="Werkzeugvorgabe" className="flex items-center gap-[8px]">
        <span className="h-[12px] w-[17px] border border-[#333] bg-linear-to-r from-[#666] to-[#eee]" />
        <Arrow className="h-[6px] w-[6px] text-black" />
      </button>
      <span className="mr-[6px] ml-[9px] h-full w-px bg-[#999]" />
      <button aria-label="Verlauf bearbeiten" className="flex h-[21px] w-[86px] shrink-0 border border-black bg-[#eee] text-black">
        <span className="m-px flex-1 self-stretch border border-black bg-linear-to-r from-black to-white" />
        <span className="flex w-[11px] items-center justify-center self-stretch border-l border-black">
          <Arrow className="h-[6px] w-[6px]" />
        </span>
      </button>
      <span className="mx-[9px] h-[25px] w-px bg-[#999]" />
      <div className="flex gap-[2px]">
        <button aria-label="Linear" className="flex h-[19px] w-[20px] items-center justify-center rounded-[3px] border border-[#555] bg-[#aaa]">
          <span className="h-[12px] w-[16px] border border-[#222] bg-linear-to-r from-[#444] to-[#ccc]" />
        </button>
        {['Radial', 'Winkel', 'Reflektiert', 'Raute'].map((name) => (
          <button key={name} aria-label={name} className="flex h-[19px] w-[18px] items-center justify-center">
            <span className="h-[13px] w-[15px] border border-[#222] bg-[radial-gradient(#eee,#333)]" />
          </button>
        ))}
      </div>
      <span className="mx-[8px] h-[25px] w-px bg-[#999]" />
      <label className="flex items-center gap-[4px]">
        Modus:
        <select className="h-[16px] w-[115px] appearance-none border border-[#999] bg-[#ddd]">
          <option>Normal</option>
        </select>
      </label>
      <label className="ml-[6px] flex items-center gap-[4px]">
        Deckkr.:
        <input defaultValue="100%" className="h-[16px] w-[52px] border border-[#999] bg-[#eee] text-center" />
      </label>
      <div className="ml-auto flex gap-[9px] pr-[41px]">
        <Check label="Umkehren" />
        <Check label="Dither" />
        <Check label="Transparenz" />
      </div>
    </div>
  );
}

export default function App() {
  return (
    <div className="relative min-h-screen border-2 border-r border-b border-[#4a4d59] bg-[#e2e0e4] pr-[3px] pb-[3px] pl-[2px] font-['Open_Sans','Noto_Sans',sans-serif] text-[#222]">
      <div className="border-l border-[#555] bg-[#d6d6d6]">
        <AppBar />
        <nav className="flex h-[22px] items-center gap-[18px] pl-[8px] text-[11px]">
          {menus.map((m) => (
            <button key={m}>{m}</button>
          ))}
        </nav>
        <OptionsBar />
        <div className="relative flex min-h-[calc(100vh-94px)] border-t border-b border-[#444]">
          <ToolBox />
          <Document />
          <Dock />
          <LayersPanel />
        </div>
      </div>
      <PolarDialog />
    </div>
  );
}
